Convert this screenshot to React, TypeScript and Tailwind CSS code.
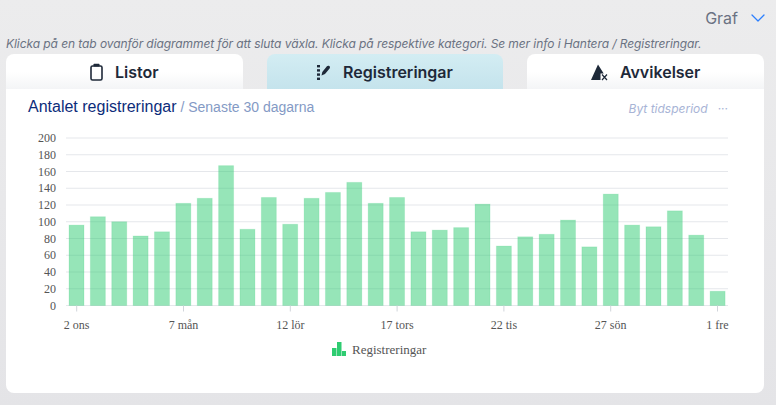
import React from 'react';
import { ChevronDown } from 'lucide-react';

const values = [96, 106, 100, 83, 88, 122, 128, 167, 91, 129, 97, 128, 135, 147, 122, 129, 88, 90, 93, 121, 71, 82, 85, 102, 70, 133, 96, 94, 113, 84, 17];
const xLabels = ['2 ons', '7 mån', '12 lör', '17 tors', '22 tis', '27 sön', '1 fre'];
const yTicks = [0, 20, 40, 60, 80, 100, 120, 140, 160, 180, 200];

const Y0 = 186.5;
const yPos = (v: number) => Y0 - v * 0.8375;
const barX = (i: number) => 63 + i * 21.37;

const ClipboardIcon = () => (
  <svg width="13" height="18" viewBox="0 0 13 18" fill="none" stroke="currentColor" strokeWidth="1.6">
    <rect x="1" y="3" width="11" height="14" rx="1.5" />
    <rect x="3.5" y="0.8" width="6" height="2.6" rx="0.6" fill="currentColor" stroke="none" />
  </svg>
);

const ListIcon = () => (
  <svg width="14" height="17" viewBox="0 0 14 17" fill="currentColor">
    <rect x="0" y="1" width="3" height="2.4" />
    <rect x="0" y="5.2" width="3" height="2.4" />
    <rect x="0" y="9.4" width="3" height="2.4" />
    <rect x="0" y="13.6" width="3" height="2.4" />
    <path d="M4.5 11.5l.8-3.6 4.6-5.6c.6-.7 1.6-.8 2.4-.2s.9 1.6.3 2.3L8 9.9l-3.5 1.6z" />
  </svg>
);

const WarningIcon = () => (
  <svg width="17" height="17" viewBox="0 0 17 17" fill="currentColor">
    <path d="M7 0.5L0 16h9.5V9.5h3.2L7 0.5z" />
    <path d="M11 10.5l5 5.5M16 10.5l-5 5.5" stroke="currentColor" strokeWidth="1.2" fill="none" />
  </svg>
);

const Tab = ({ label, icon, active }: { label: string; icon: React.ReactNode; active?: boolean }) => (
  <button
    className={
      active
        ? 'flex h-9 items-center justify-center gap-3 rounded-t-lg bg-gradient-to-b from-[#d3edf3] to-[#c4e3ec] text-gray-800'
        : 'flex h-9 items-center justify-center gap-3 rounded-t-lg bg-gradient-to-b from-white via-white to-gray-100 text-gray-800'
    }
  >
    {icon}
    <span className="text-base font-semibold">{label}</span>
  </button>
);

const Chart = () => (
  <svg width="758" height="240" viewBox="0 0 758 240" className="block" style={{ fontFamily: '"Liberation Serif", serif' }}>
    {yTicks.map((t) => (
      <g key={t}>
        <line x1="60" x2="722" y1={yPos(t)} y2={yPos(t)} stroke="#e5e7eb" />
        <text x="50" y={yPos(t) + 4} textAnchor="end" fontSize="12" fill="#555555">{t}</text>
      </g>
    ))}
    {values.map((v, i) => (
      <rect key={i} x={barX(i)} y={yPos(v)} width="15" height={v * 0.8375} fill="#2ecc71" fillOpacity="0.5" stroke="#2ecc71" strokeOpacity="0.15" />
    ))}
    {xLabels.map((l, i) => {
      const x = 70.7 + i * 106.8;
      return (
        <g key={l}>
          <line x1={x} x2={x} y1={Y0} y2={Y0 + 6} stroke="#d1d5db" />
          <text x={x} y={Y0 + 23} textAnchor="middle" fontSize="12" fill="#555555">{l}</text>
        </g>
      );
    })}
    <g fill="#2ecc71">
      <rect x="326" y="229" width="4.5" height="8" />
      <rect x="331" y="223" width="4.5" height="14" />
      <rect x="336" y="232" width="4" height="5" />
    </g>
    <text x="346" y="235" fontSize="13" fill="#555555">Registreringar</text>
  </svg>
);

export default function App() {
  return (
    <div className="h-[405px] w-[776px] overflow-hidden bg-gradient-to-b from-[#ececed] to-zinc-200 pl-1.5 pr-3 pt-2" style={{ fontFamily: 'Inter, sans-serif' }}>
      <div className="flex h-5 items-center justify-end gap-2 text-gray-500">
        <span className="text-base">Graf</span>
        <ChevronDown className="-mr-1.5 h-6 w-6 text-blue-500" strokeWidth={1.25} />
      </div>
      <p className="mt-2 truncate text-xs italic tracking-[-0.007em] text-gray-500">
        Klicka på en tab ovanför diagrammet för att sluta växla. Klicka på respektive kategori. Se mer info i Hantera / Registreringar.
      </p>
      <div className="mt-0.5 grid grid-cols-3 gap-6">
        <Tab label="Listor" icon={<ClipboardIcon />} />
        <Tab label="Registreringar" icon={<ListIcon />} active />
        <Tab label="Avvikelser" icon={<WarningIcon />} />
      </div>
      <div className="relative -mt-px h-76 rounded-b-lg bg-white">
        <div className="flex items-center justify-between pl-5.5 pr-9 pt-1.5">
          <div className="text-base" style={{ fontFamily: '"Liberation Sans", sans-serif' }}>
            <span className="text-[#0c2c7a]">Antalet registreringar</span>
            <span className="text-sm text-[#849ac5]"> / Senaste 30 dagarna</span>
          </div>
          <div className="mt-1 flex items-center gap-2.5 text-xs italic text-[#a8b4d6]">
            <span>Byt tidsperiod</span>
            <span className="not-italic">···</span>
          </div>
        </div>
        <Chart />
      </div>
    </div>
  );
}
